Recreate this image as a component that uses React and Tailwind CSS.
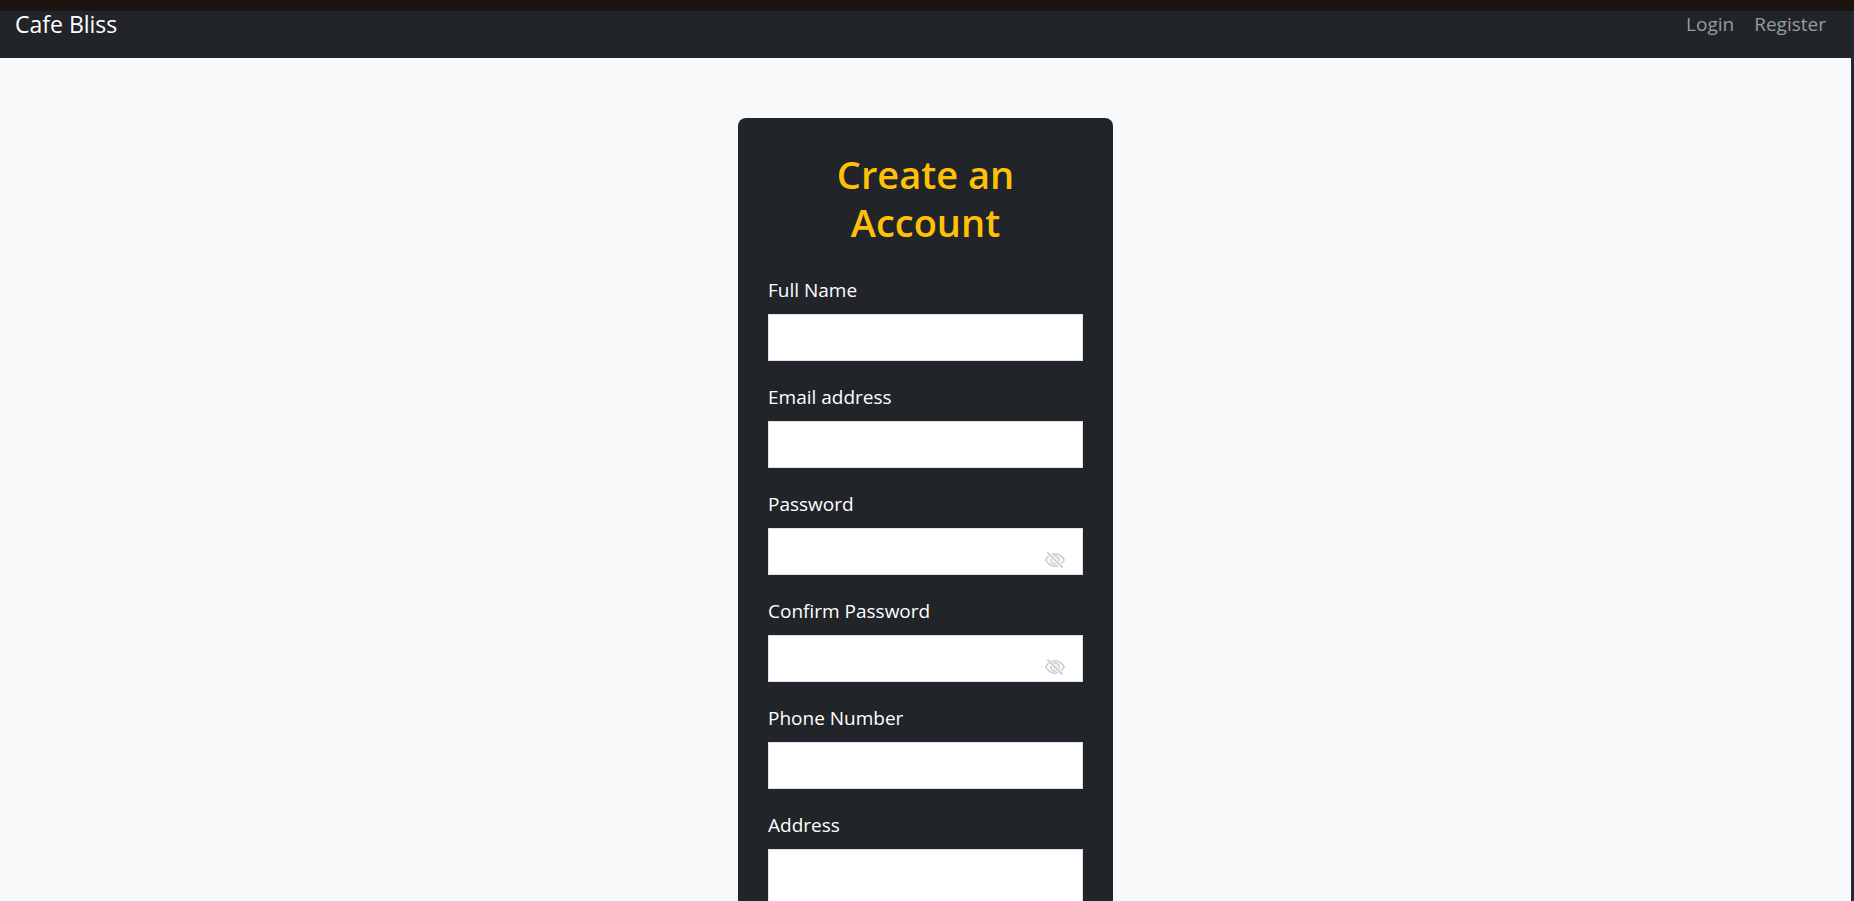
import React from "react";

const fields = [
  { id: "name", label: "Full Name", type: "text" },
  { id: "email", label: "Email address", type: "email" },
  { id: "password", label: "Password", type: "password" },
  { id: "confirm", label: "Confirm Password", type: "password" },
  { id: "phone", label: "Phone Number", type: "tel" },
];

function EyeOff() {
  return (
    <svg viewBox="0 0 20 16" className="h-4 w-5" fill="none" stroke="#c9c9cb">
      <path d="M0.8 8C3 4 6.200 1.800 10 1.800S17 4 19.200 8C17 12 13.800 14.200 10 14.200S3 12 0.800 8Z" strokeWidth="1.5" />
      <circle cx="10" cy="8" r="4.100" strokeWidth="1.5" />
      <circle cx="10" cy="8" r="1.6" strokeWidth="1.2" />
      <path d="M3 1 17 15" stroke="#ffffff" strokeWidth="3.2" />
      <path d="M2.400 0.400 17.600 15.600" strokeWidth="1.6" />
    </svg>
  );
}

function Field({ id, label, type }) {
  return (
    <div>
      <label htmlFor={id} className="mb-2 block leading-8">
        {label}
      </label>
      <div className="relative">
        <input
          id={id}
          type={type}
          className="block h-[47px] w-full border border-[#dee2e6] bg-white px-4 text-[#212529] outline-none"
        />
        {type === "password" && (
          <button
            type="button"
            aria-label={"Show " + label.toLowerCase()}
            className="absolute right-[18px] bottom-[7px]"
          >
            <EyeOff />
          </button>
        )}
      </div>
    </div>
  );
}

export default function App() {
  return (
    <div className="flex h-screen flex-col overflow-hidden bg-[#f8f9fb] font-['Open_Sans','Noto_Sans',sans-serif] text-[19px]">
      <div className="h-[11px] shrink-0 bg-[#1a1510]" />
      <div className="flex min-h-0 flex-1">
        <div className="min-w-0 flex-1">
          <nav className="flex h-[47px] items-start justify-between bg-[#212529] pr-[25px] pl-[15px] leading-[26px]">
            <a href="#" className="text-[23px] text-white">
              Cafe Bliss
            </a>
            <div className="flex gap-5 text-[#9a9b9d]">
              <a href="#login">Login</a>
              <a href="#register">Register</a>
            </div>
          </nav>
          <main className="px-4 pt-[60px]">
            <form className="mx-auto w-full max-w-[375px] rounded-lg bg-[#212529] px-[30px] py-8 text-white">
              <h1 className="mb-7 px-8 text-center text-[38px] leading-12 font-semibold text-[#ffc107]">
                Create an Account
              </h1>
              <div className="flex flex-col gap-5">
                {fields.map((field) => (
                  <Field key={field.id} {...field} />
                ))}
                <div>
                  <label htmlFor="address" className="mb-2 block leading-8">
                    Address
                  </label>
                  <textarea
                    id="address"
                    rows={3}
                    className="block w-full resize-none border border-[#dee2e6] bg-white px-4 py-2 text-[#212529] outline-none"
                  />
                </div>
              </div>
            </form>
          </main>
        </div>
        <div className="w-[3px] shrink-0 bg-[#212938]" />
      </div>
    </div>
  );
}
